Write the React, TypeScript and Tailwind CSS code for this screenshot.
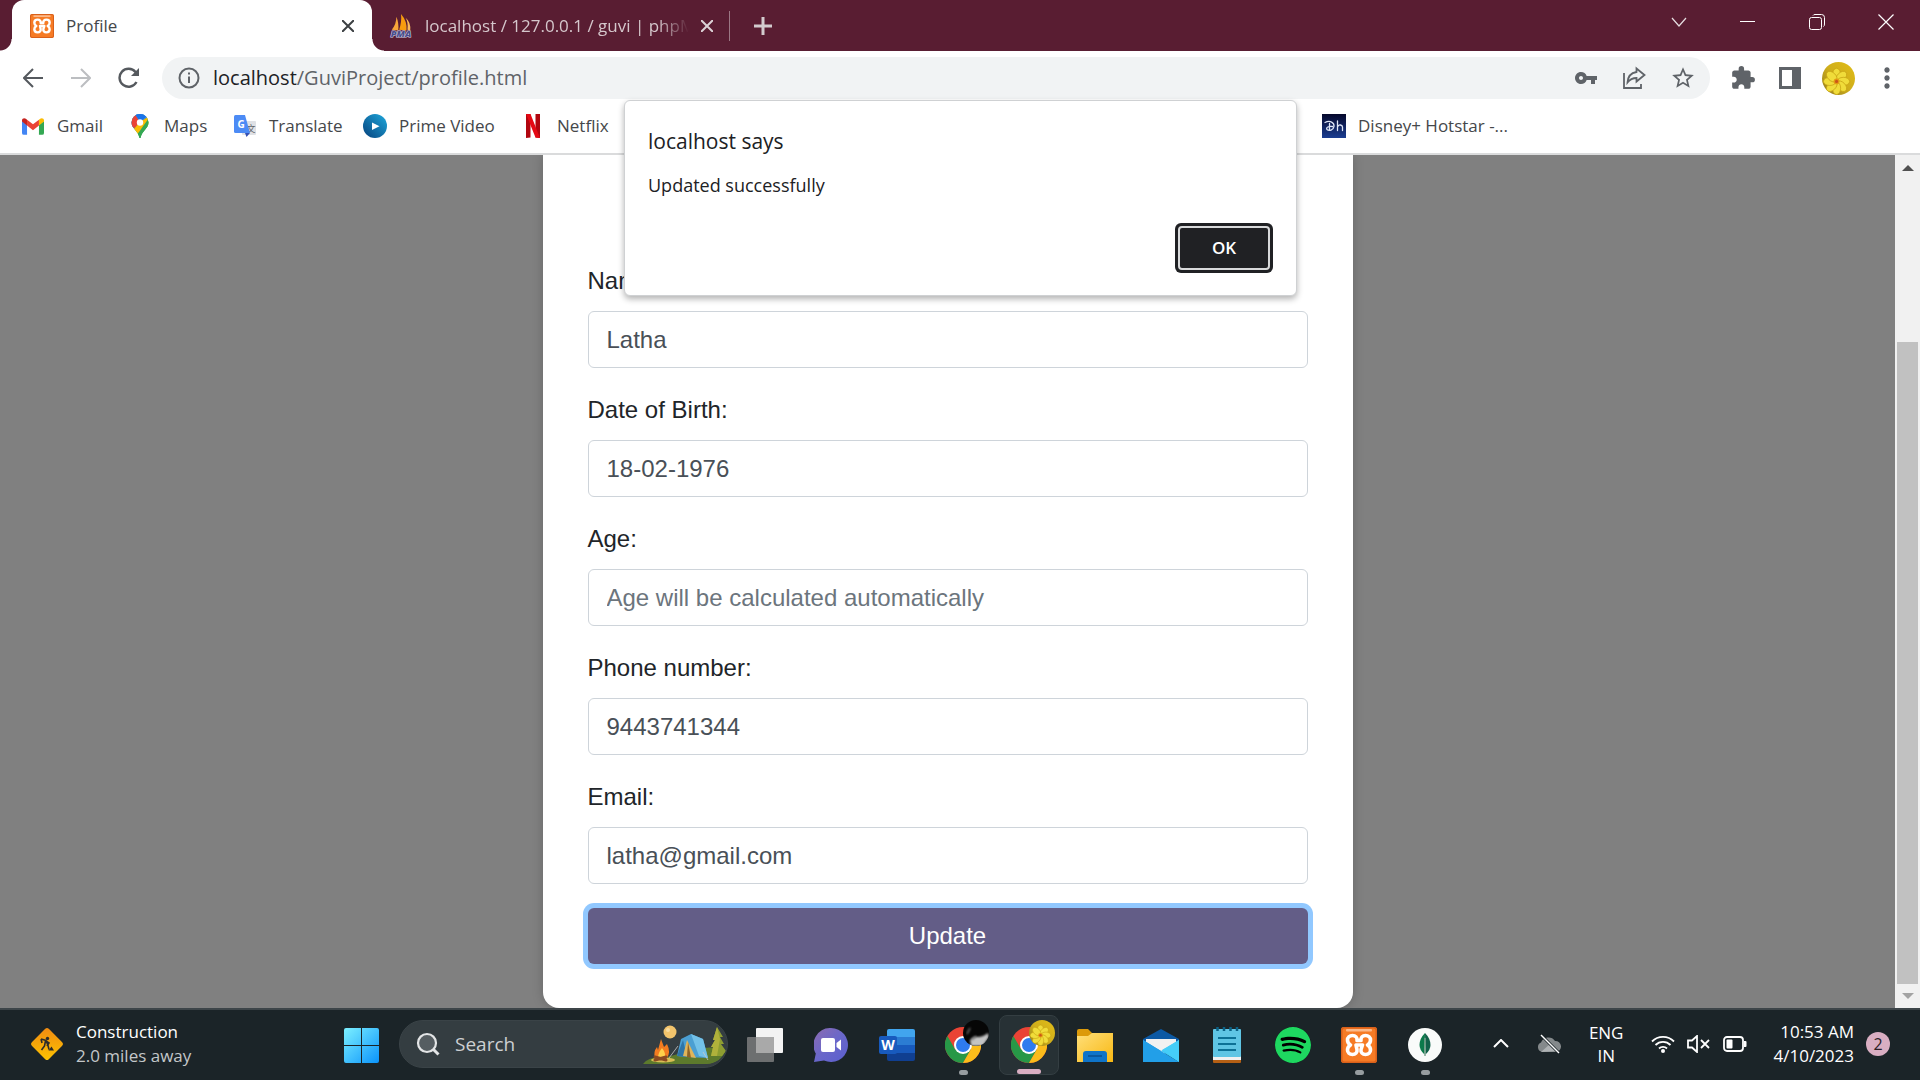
import type { ReactNode } from "react";
import { SiSpotify } from "react-icons/si";
import { MdVpnKey, MdStarBorder, MdExtension, MdMoreVert } from "react-icons/md";

const ui = "font-['Open_Sans',sans-serif]";

function XamppIcon({ className }: { className: string }) {
  return (
    <span className={`flex shrink-0 rounded-[3px] bg-[#f47a26] ${className}`}>
      <svg viewBox="0 0 36 36" className="size-full" aria-hidden="true">
        <rect width="36" height="36" rx="3" fill="#d9601a" />
        <rect x="1.5" y="1.5" width="33" height="33" rx="2" fill="#f67b25" />
        <rect x="5" y="2" width="26" height="2.5" rx="1" fill="#fbb98a" />
        <path
          d="M16 13.500C16.500 10.500 14.500 8.500 11.500 8.500 8.500 8.500 6.500 10.500 6.500 13c0 2 1 3.800 3 5-2 1.200-3 3-3 5 0 2.500 2 4.500 5 4.500s5-2 4.500-5M20 13.500c-.5-3 1.500-5 4.500-5s5 2 5 4.500c0 2-1 3.800-3 5 2 1.200 3 3 3 5 0 2.500-2 4.500-5 4.500s-5-2-4.500-5M16 13.500h4M15 18h6.500M16 22.500L15 18M20 22.500L21.500 18"
          fill="none" stroke="#fff" strokeWidth="3.6" strokeLinecap="round" strokeLinejoin="round"
        />
      </svg>
    </span>
  );
}

function PmaIcon() {
  return (
    <svg viewBox="0 0 26 26" className="size-6 shrink-0" aria-hidden="true">
      <path d="M8 3Q11 10 10 18L3 17Q8 11 8 3Z" fill="#f8a63a" />
      <path d="M13 0Q20 8 19 18L11 17Q14 8 13 0Z" fill="#f89c0e" />
      <path d="M18 4Q24 9 23 18L20 17Q21 9 18 4Z" fill="#f9b95c" />
      <text x="13" y="25" textAnchor="middle" fontFamily="Open Sans" fontWeight="800" fontStyle="italic" fontSize="10" fill="#4a4f8c" stroke="#d8d6ea" strokeWidth="1.2" paintOrder="stroke">PMA</text>
    </svg>
  );
}

function GmailIcon() {
  return (
    <svg viewBox="0 0 24 18" className="h-[17px] w-[22px]" aria-hidden="true">
      <path d="M0 3v13q0 2 2 2h3.500V7Z" fill="#4285f4" />
      <path d="M24 3v13q0 2-2 2h-3.500V7Z" fill="#34a853" />
      <path d="M5.500 8V1.500L12 6.500l6.500-5V8L12 13Z" fill="#ea4335" />
      <path d="M0 3.500V2.500C0 .2 2.500-.7 4.200.6L5.500 1.500V8Z" fill="#c5221f" />
      <path d="M24 3.500V2.500C24 .2 21.500-.7 19.800.6L18.500 1.500V8Z" fill="#fbbc04" />
    </svg>
  );
}

function MapsIcon() {
  return (
    <svg viewBox="0 0 18 24" className="h-6 w-[18px]" aria-hidden="true">
      <clipPath id="pin"><path d="M9 0a8.500 8.500 0 0 1 8.500 8.500c0 6-6.500 8-8 15.500h-1C7 16.500.5 14.500.5 8.500A8.500 8.500 0 0 1 9 0Z" /></clipPath>
      <g clipPath="url(#pin)">
        <rect width="18" height="24" fill="#34a853" />
        <path d="M0 0h18v2L9 8l-8 8H0Z" fill="#4285f4" />
        <path d="M0 13V0h4l5 8-5 6Z" fill="#ea4335" />
        <path d="M4 0l5 8 7-6-6-3Z" fill="#1a73e8" />
        <path d="M9 8l8-5 1 8-16 12V16Z" fill="#fbbc04" />
        <path d="M18 4v20H4Q12 12 18 4Z" fill="#34a853" />
      </g>
      <circle cx="9" cy="8.5" r="3.2" fill="#fff" />
    </svg>
  );
}

function TranslateIcon() {
  return (
    <svg viewBox="0 0 22 22" className="size-[22px]" aria-hidden="true">
      <rect x="8" y="6" width="14" height="14" rx="1" fill="#dfe1e5" />
      <text x="17" y="17" textAnchor="middle" fontFamily="Noto Sans CJK SC" fontSize="9" fill="#5f6368">文</text>
      <path d="M1.500 0H11l5 18H1.500Q0 18 0 16.500v-15Q0 0 1.500 0Z" fill="#4c8bf5" />
      <path d="M11 18h5l-3.500 4Z" fill="#3450b4" />
      <text x="7" y="12.5" textAnchor="middle" fontFamily="Open Sans" fontWeight="700" fontSize="10" fill="#fff">G</text>
    </svg>
  );
}

function PrimeIcon() {
  return (
    <svg viewBox="0 0 24 24" className="size-6" aria-hidden="true">
      <linearGradient id="prime" x1="1" y1="0" x2="0" y2="1"><stop stopColor="#1fa9dd" /><stop offset="1" stopColor="#06417c" /></linearGradient>
      <circle cx="12" cy="12" r="12" fill="url(#prime)" />
      <path d="M9 8.500v7.500l7.500-3.700Z" fill="#fff" />
    </svg>
  );
}

function NetflixIcon() {
  return (
    <svg viewBox="0 0 14 24" className="h-6 w-[14px]" aria-hidden="true">
      <path d="M0 0h4.500v23.500L0 24ZM9.500 0H14v24l-4.500-.5Z" fill="#b1060f" />
      <path d="M0 0h4.500L14 24l-4.500-.5Z" fill="#e50914" />
    </svg>
  );
}

function HotstarIcon() {
  return (
    <svg viewBox="0 0 24 24" className="size-6" aria-hidden="true">
      <linearGradient id="hot" x1="0" y1="0" x2="0" y2="1"><stop stopColor="#05082b" /><stop offset="1" stopColor="#1b3d91" /></linearGradient>
      <rect width="24" height="24" fill="url(#hot)" />
      <path d="M3 8.500c5-2.500 9.500 0 9 4-.5 3.500-5 5-7 3-1.500-2 2-3.700 5.500-3M7.500 9.500v6M15.500 7v9.500M15.500 13q1-2.500 3-2t2 2v3.500" fill="none" stroke="#dfe6f7" strokeWidth="1.3" strokeLinecap="round" />
    </svg>
  );
}

function Flower({ className }: { className: string }) {
  const petals = [0, 45, 90, 135, 180, 225, 270, 315];
  return (
    <svg viewBox="0 0 34 34" className={className} aria-hidden="true">
      <clipPath id="round"><circle cx="17" cy="17" r="17" /></clipPath>
      <linearGradient id="gold" x1="0" y1="1" x2="1" y2="0"><stop stopColor="#8f7a20" /><stop offset=".5" stopColor="#cfae1c" /><stop offset="1" stopColor="#e2bd16" /></linearGradient>
      <g clipPath="url(#round)">
        <rect width="34" height="34" fill="url(#gold)" />
        {petals.map((a) => (
          <ellipse key={a} cx="15" cy="13" rx="4.2" ry="6.5" fill="#f0dc3a" stroke="#c9a515" strokeWidth=".8" transform={`rotate(${a} 15 20)`} />
        ))}
        <circle cx="15" cy="20" r="3" fill="#e49a12" />
        <circle cx="15" cy="20" r="1.6" fill="#c9551a" />
      </g>
    </svg>
  );
}

function Chrome({ children }: { children?: ReactNode }) {
  return (
    <span className="relative flex">
      <svg viewBox="0 0 36 36" className="size-9" aria-hidden="true">
        <circle cx="18" cy="18" r="18" fill="#ea4335" />
        <path d="M2.400 9A18 18 0 0 0 18 36l8-13.500H10.200Z" fill="#279847" />
        <path d="M33.600 9A18 18 0 0 1 18 36l7.800-13.500L18 9Z" fill="#fbbc1b" />
        <circle cx="18" cy="18" r="9" fill="#fff" />
        <circle cx="18" cy="18" r="7" fill="#2f7bee" />
      </svg>
      <span className="absolute -top-[7px] left-[18px]">{children}</span>
    </span>
  );
}

function DarkAvatar() {
  return (
    <svg viewBox="0 0 26 26" className="size-[26px]" aria-hidden="true">
      <clipPath id="dark"><circle cx="13" cy="13" r="13" /></clipPath>
      <filter id="soft"><feGaussianBlur stdDeviation="1" /></filter>
      <g clipPath="url(#dark)">
        <rect width="26" height="26" fill="#060606" />
        <path d="M7 20q4-4 8-3 5 0 10-4l1 4-6 9H8Z" fill="#c4c4c4" filter="url(#soft)" />
        <path d="M4 14l3-6M9 20l4-4" stroke="#777" strokeWidth="1.5" filter="url(#soft)" />
      </g>
    </svg>
  );
}

const bookmarks: { label: string; icon: ReactNode; width: string }[] = [
  { label: "Gmail", icon: <GmailIcon />, width: "w-[107px]" },
  { label: "Maps", icon: <MapsIcon />, width: "w-[105px]" },
  { label: "Translate", icon: <TranslateIcon />, width: "w-[130px]" },
  { label: "Prime Video", icon: <PrimeIcon />, width: "w-[158px]" },
  { label: "Netflix", icon: <NetflixIcon />, width: "w-[801px]" },
  { label: "Disney+ Hotstar -...", icon: <HotstarIcon />, width: "w-[220px]" },
];

function TabStrip() {
  return (
    <header className="flex h-[51px] items-stretch bg-[#591d32] pl-3 text-[17px]">
      <div role="tab" aria-selected="true" className="relative flex w-[360px] items-center rounded-t-xl bg-white pl-[18px] pr-3 text-[#45474a]">
        <span className="absolute -left-3 bottom-0 size-3 bg-[radial-gradient(circle_at_0_0,#591d32_11px,white_12px)]" />
        <span className="absolute -right-3 bottom-0 size-3 bg-[radial-gradient(circle_at_100%_0,#591d32_11px,white_12px)]" />
        <XamppIcon className="size-6" />
        <span className="ml-3 flex-1">Profile</span>
        <button aria-label="Close tab" className="flex size-6 items-center justify-center">
          <svg viewBox="0 0 12 12" className="size-3" stroke="#3c4043" strokeWidth="2"><path d="M0 0l12 12M12 0L0 12" /></svg>
        </button>
      </div>
      <div role="tab" aria-selected="false" className="flex w-[358px] items-center pl-[17px] text-[#d5c7cc]">
        <PmaIcon />
        <span className="ml-3 w-[264px] overflow-hidden whitespace-nowrap [mask-image:linear-gradient(to_right,black_88%,transparent)]">
          localhost / 127.0.0.1 / guvi | phpMyAdmin
        </span>
        <button aria-label="Close tab" className="ml-[6px] flex size-6 items-center justify-center">
          <svg viewBox="0 0 12 12" className="size-3" stroke="#dcd2d6" strokeWidth="2"><path d="M0 0l12 12M12 0L0 12" /></svg>
        </button>
        <span className="ml-auto h-[30px] w-px bg-[#9b7784]" />
      </div>
      <button aria-label="New tab" className="flex w-[65px] items-center justify-center">
        <svg viewBox="0 0 18 18" className="size-[18px]" stroke="#d3cbce" strokeWidth="3"><path d="M9 0v18M0 9h18" /></svg>
      </button>
      <div className="ml-auto flex h-[43px]">
        <button aria-label="Search tabs" className="flex w-[69px] items-center justify-center">
          <svg viewBox="0 0 16 10" className="h-[10px] w-4" fill="none" stroke="#e5dde0" strokeWidth="1.2"><path d="M1 1l7 8 7-8" /></svg>
        </button>
        <button aria-label="Minimize" className="flex w-[69px] items-center justify-center"><span className="h-px w-[15px] bg-white" /></button>
        <button aria-label="Restore" className="flex w-[69px] items-center justify-center">
          <svg viewBox="0 0 16 16" className="size-4" fill="none" stroke="#fff"><rect x=".5" y="3.5" width="12" height="12" rx="2" /><path d="M4 1.500Q4.500.5 6 .5h6.500q3 0 3 3V10q0 2-1 2.500" /></svg>
        </button>
        <button aria-label="Close" className="flex w-[69px] items-center justify-center">
          <svg viewBox="0 0 16 16" className="size-4" stroke="#fff" strokeWidth="1.2"><path d="M.5.5l15 15M15.500.5l-15 15" /></svg>
        </button>
      </div>
    </header>
  );
}

function Toolbar() {
  return (
    <div className="flex h-[54px] items-center bg-white pl-[9px] pr-[17px] text-[#5f6368]">
      <nav className="flex w-[153px]" aria-label="History">
        <button aria-label="Back" className="flex w-12 items-center justify-center">
          <svg viewBox="0 0 20 20" className="size-5" fill="none" stroke="#55595e" strokeWidth="2"><path d="M20 10H2M10 1l-9 9 9 9" /></svg>
        </button>
        <button aria-label="Forward" className="flex w-12 items-center justify-center">
          <svg viewBox="0 0 20 20" className="size-5" fill="none" stroke="#bcbec1" strokeWidth="2"><path d="M0 10h18M10 1l9 9-9 9" /></svg>
        </button>
        <button aria-label="Reload" className="flex w-12 items-center justify-center">
          <svg viewBox="0 0 22 22" className="size-[22px]" fill="none" stroke="#55595e" strokeWidth="2.4"><path d="M18.500 15A9 9 0 1 1 17.500 5l2 2.500" /><path d="M21 1v8h-8Z" fill="#55595e" stroke="none" /></svg>
        </button>
      </nav>
      <div className="flex h-[42px] flex-1 items-center rounded-full bg-[#f1f3f4] pl-4 pr-[14px]">
        <svg viewBox="0 0 22 22" className="size-[22px]" fill="none" stroke="#5f6368" strokeWidth="2" aria-hidden="true"><circle cx="11" cy="11" r="9.5" /><path d="M11 9.500V16M11 5.500v2" /></svg>
        <div className="ml-[13px] flex-1 text-[20px]"><span className="text-[#202124]">localhost</span>/GuviProject/profile.html</div>
        <div className="flex items-center gap-6">
          <button aria-label="Passwords"><MdVpnKey className="size-6" /></button>
          <button aria-label="Share">
            <svg viewBox="0 0 24 24" className="size-6" fill="none" stroke="#5f6368" strokeWidth="1.8"><path d="M2 7v15h17v-4" /><path d="M14.500 2.500L22.500 9l-8 6.500V12Q9 12 5.500 16.500 6 7.500 14.500 6Z" /></svg>
          </button>
          <button aria-label="Bookmark"><MdStarBorder className="size-[26px]" /></button>
        </div>
      </div>
      <div className="flex items-center pl-5">
        <button aria-label="Extensions" className="flex w-[26px] justify-center"><MdExtension className="size-[26px]" /></button>
        <button aria-label="Side panel" className="ml-[23px]"><span className="block size-[22px] border-[3px] border-r-[9px] border-[#5f6368]" /></button>
        <button aria-label="Account" className="ml-[21px]"><Flower className="size-[33px]" /></button>
        <button aria-label="Menu" className="ml-4"><MdMoreVert className="size-8" /></button>
      </div>
    </div>
  );
}

function BookmarkBar() {
  return (
    <nav aria-label="Bookmarks" className="flex h-[50px] items-center overflow-hidden border-b-2 border-[#dadbdc] bg-white pb-[6px] pl-[21px] text-[17px] text-[#45474a]">
      {bookmarks.map((b) => (
        <a key={b.label} href="#" className={`flex shrink-0 items-center whitespace-nowrap ${b.width}`}>
          <span className="flex w-6 justify-center">{b.icon}</span>
          <span className="ml-3">{b.label}</span>
        </a>
      ))}
    </nav>
  );
}

function AlertDialog() {
  return (
    <div role="alertdialog" aria-labelledby="alert-title" className="absolute left-1/2 top-[100px] ml-[-336px] h-[196px] w-[673px] rounded-md border border-[#cfd1d3] bg-white px-[23px] pt-6 text-[#202124] shadow-[0_3px_6px_rgba(0,0,0,0.3)]">
      <h1 id="alert-title" className="text-[21px] leading-8">localhost says</h1>
      <p className="mt-3 text-[18px] leading-8">Updated successfully</p>
      <button className="ml-auto mt-[22px] block h-[50px] w-[98px] rounded-md bg-[#202124] p-[3px]">
        <span className="flex size-full items-center justify-center rounded-sm border-2 border-[#d9dadb] text-[17px] font-semibold text-white">OK</span>
      </button>
    </div>
  );
}

const fields = [
  { id: "name", label: "Name:", value: "Latha", placeholder: "" },
  { id: "dob", label: "Date of Birth:", value: "18-02-1976", placeholder: "" },
  { id: "age", label: "Age:", value: "", placeholder: "Age will be calculated automatically" },
  { id: "phone", label: "Phone number:", value: "9443741344", placeholder: "" },
  { id: "email", label: "Email:", value: "latha@gmail.com", placeholder: "" },
];

function ProfilePage() {
  return (
    <main className="flex min-h-0 flex-1 bg-[#808080]">
      <div className="flex flex-1 justify-center overflow-hidden font-['Liberation_Sans',sans-serif] text-[24px] leading-9">
        <form className="flex w-full max-w-[810px] flex-col gap-6 rounded-b-2xl bg-white px-[45px] pt-[108px] shadow-[0_0_12px_rgba(0,0,0,0.2)]">
          {fields.map((f) => (
            <div key={f.id} className="flex flex-col gap-3">
              <label htmlFor={f.id} className="text-[#212529]">{f.label}</label>
              <input id={f.id} defaultValue={f.value} placeholder={f.placeholder} className="h-[57px] rounded-md border border-[#ced4da] bg-white px-[18px] text-[#495057] placeholder:text-[#6c757d]" />
            </div>
          ))}
          <button type="button" className="h-[56px] rounded-md bg-[#635d87] text-white ring-5 ring-[#91c8ff]">Update</button>
        </form>
      </div>
      <div className="flex w-[25px] flex-col items-center bg-[#f1f1f1]" aria-hidden="true">
        <svg viewBox="0 0 12 6" className="mt-[10px] h-[6px] w-3"><path d="M0 6l6-6 6 6Z" fill="#505050" /></svg>
        <div className="mt-[171px] w-[21px] flex-1 bg-[#c1c1c1]" />
        <svg viewBox="0 0 12 6" className="mb-[9px] mt-[9px] h-[6px] w-3"><path d="M0 0l6 6 6-6Z" fill="#a3a3a3" /></svg>
      </div>
    </main>
  );
}

function WordIcon() {
  return (
    <svg viewBox="0 0 36 34" className="h-[34px] w-9" aria-hidden="true">
      <path d="M10 1h24q2 0 2 2v6H8V3q0-2 2-2Z" fill="#41a5ee" />
      <path d="M8 9h28v8H8Z" fill="#2b7cd3" /><path d="M8 17h28v8H8Z" fill="#185abd" />
      <path d="M8 25h28v6q0 2-2 2H10q-2 0-2-2Z" fill="#103f91" />
      <rect x="0" y="8" width="18" height="18" rx="2" fill="#185abd" />
      <text x="9" y="22" textAnchor="middle" fontFamily="Open Sans" fontWeight="700" fontSize="14" fill="#fff">W</text>
    </svg>
  );
}

function TentScene() {
  return (
    <svg viewBox="0 0 84 40" className="h-10 w-[84px]" aria-hidden="true">
      <path d="M0 40Q5 32 24 33L50 26q22-6 32 2-4 9-15 12Z" fill="#5d7a2c" />
      <ellipse cx="20" cy="36" rx="12" ry="2.5" fill="#d9bd54" />
      <circle cx="27" cy="8" r="6.5" fill="#f2c46c" /><circle cx="25" cy="6" r="2" fill="#f8dca0" />
      <path d="M74 3l6 10h-3l4 7h-3l5 7-4 5H68l2-9h-2l4-7h-2Z" fill="#8e9d31" />
      <path d="M74 3l3 12-3 17h-6l2-9h-2l4-7h-2Z" fill="#b0b13b" />
      <path d="M34 32l4-17 10-5 12 5 5 19-22-1Z" fill="#4b9fd2" />
      <path d="M38 15l10-5 8 22 9 2-5-19-12-5Z" fill="#73c1e8" />
      <path d="M34 32l6-16 4 17Z" fill="#2e75a8" /><path d="M40 32l4-16 9 18Z" fill="#e0b55b" /><path d="M44 33l1-15 3 16Z" fill="#8e6327" />
      <path d="M26 34l9-12M60 28l5 8" stroke="#c9c9c9" strokeWidth=".8" />
      <path d="M12 34q-2-6 2-11l1 3 3-11 3 8 3-3q4 8 0 14Z" fill="#f47c20" />
      <path d="M15 34q0-5 4-10 4 5 3 10Z" fill="#ffd04a" />
      <path d="M12 33l11 3M23 33l-11 3" stroke="#8b4a22" strokeWidth="3" strokeLinecap="round" />
    </svg>
  );
}

const apps: { name: string; icon: ReactNode; state?: "running" | "active" }[] = [
  {
    name: "Task view",
    icon: <svg viewBox="0 0 36 34" className="h-[34px] w-9"><rect x="9" y="0" width="27" height="25" rx="1" fill="#f3f3f3" /><rect x="0" y="9" width="27" height="25" rx="1" fill="#6d6f70" /><path d="M9 9h18v16H9Z" fill="#a9a9a9" /></svg>,
  },
  {
    name: "Chat",
    icon: (
      <svg viewBox="0 0 34 34" className="size-[34px]">
        <linearGradient id="chat" x1="0" y1="0" x2="1" y2="1"><stop stopColor="#8c6bb0" /><stop offset=".5" stopColor="#6a67c9" /><stop offset="1" stopColor="#5b5fd0" /></linearGradient>
        <path d="M17 0a17 17 0 1 1-7 32.500L0 34l1.800-8.500A17 17 0 0 1 17 0Z" fill="url(#chat)" />
        <rect x="7" y="10" width="14" height="14" rx="2" fill="#fff" /><path d="M22.500 15l4.500-3.500v11L22.500 19Z" fill="#fff" />
      </svg>
    ),
  },
  { name: "Word", icon: <WordIcon /> },
  { name: "Chrome", state: "running", icon: <Chrome><DarkAvatar /></Chrome> },
  { name: "Chrome profile", state: "active", icon: <Chrome><Flower className="size-[26px]" /></Chrome> },
  {
    name: "File Explorer",
    icon: (
      <svg viewBox="0 0 36 33" className="h-[33px] w-9">
        <path d="M0 2q0-2 2-2h9l4 4v6H0Z" fill="#dc9a0a" />
        <linearGradient id="folder" x1="0" y1="0" x2="1" y2="1"><stop stopColor="#ffdf7a" /><stop offset="1" stopColor="#f8b813" /></linearGradient>
        <path d="M0 7h11l4-3h21v29H0Z" fill="url(#folder)" />
        <path d="M6 33v-8q0-3 3-3h18q3 0 3 3v8Z" fill="#0f74c9" /><path d="M11 27h14" stroke="#0a4f8f" strokeWidth="1.5" />
      </svg>
    ),
  },
  {
    name: "Mail",
    icon: (
      <svg viewBox="0 0 36 33" className="h-[33px] w-9">
        <path d="M0 10L18 0l18 10v5H0Z" fill="#0c59a4" /><path d="M3 10h30v10L18 26 3 20Z" fill="#f1f1f1" />
        <path d="M0 11l18 11L0 33Z" fill="#1e98e4" /><path d="M36 11L18 22l18 11Z" fill="#3fc8f5" /><path d="M0 11l36 22H0Z" fill="#229fe8" /><path d="M36 11v22L19 21Z" fill="#45cdf8" />
      </svg>
    ),
  },
  {
    name: "Notepad",
    icon: (
      <svg viewBox="0 0 28 36" className="h-9 w-7">
        <rect y="28" width="28" height="8" rx="1" fill="#b45f14" /><rect y="26" width="28" height="7" fill="#f0f0f0" />
        <rect y="2" width="28" height="28" rx="1" fill="#5fc5e4" />
        <path d="M4.500 0v4M11 0v4M17.500 0v4M24 0v4" stroke="#0b6185" strokeWidth="2.5" />
        <path d="M5 11h18M5 17h18M5 23h18" stroke="#0c7196" strokeWidth="2" />
      </svg>
    ),
  },
  { name: "Spotify", icon: <span className="rounded-full bg-black"><SiSpotify className="size-9 text-[#1ed760]" /></span> },
  { name: "XAMPP", state: "running", icon: <XamppIcon className="size-9" /> },
  {
    name: "MongoDB Compass", state: "running",
    icon: (
      <svg viewBox="0 0 34 34" className="size-[34px]">
        <circle cx="17" cy="17" r="17" fill="#f9fbfa" />
        <path d="M17 5q-5.500 5.500-5.500 12 0 5 5 9.500Z" fill="#0b7a4b" /><path d="M17 5q5.500 5.500 5.500 12 0 5-5 9.500Z" fill="#116149" />
        <path d="M16.300 10h1.400v18h-1.400Z" fill="#78a08c" />
      </svg>
    ),
  },
];

function Taskbar() {
  return (
    <footer className="flex h-[72px] shrink-0 items-stretch border-t-2 border-[#3d4549] bg-[#1b2428] text-[17px] text-white">
      <button className="flex w-[330px] items-center pb-[2px] pl-[30px] text-left">
        <svg viewBox="0 0 34 34" className="size-[34px]" aria-hidden="true">
          <linearGradient id="sign" x1="0" y1="0" x2="1" y2="1"><stop stopColor="#f08a12" /><stop offset="1" stopColor="#fdc400" /></linearGradient>
          <rect x="5" y="5" width="24" height="24" rx="2.5" fill="url(#sign)" transform="rotate(45 17 17)" />
          <circle cx="17.5" cy="11.5" r="1.7" fill="#2b2b2b" />
          <path d="M11 12l5 1.500 2 5 1 4M15.500 14l-1 5-3 4M16 14l3 2-2 3M11 12l1 4" fill="none" stroke="#2b2b2b" strokeWidth="1.6" /><path d="M18.500 23.500l3-4 2.500 4Z" fill="#2b2b2b" />
        </svg>
        <span className="ml-3 leading-6">Construction<br /><span className="text-[#c3c7c9]">2.0 miles away</span></span>
      </button>
      <button aria-label="Start" className="flex w-[63px] items-center justify-center">
        <svg viewBox="0 0 35 35" className="size-[35px]">
          <linearGradient id="win" gradientUnits="userSpaceOnUse" x1="0" y1="0" x2="35" y2="35"><stop stopColor="#7cf0ff" /><stop offset="1" stopColor="#0a93fb" /></linearGradient>
          <path d="M2 0h15v17H0V2q0-2 2-2ZM18 0h15q2 0 2 2v15H18ZM0 18h17v17H2q-2 0-2-2ZM18 18h17v15q0 2-2 2H18Z" fill="url(#win)" />
        </svg>
      </button>
      <div className="ml-[6px] flex w-[329px] items-center pb-[2px]">
        <label className="flex h-12 w-full items-center rounded-full border border-[#3a4347] bg-[#343d41] pl-4">
          <svg viewBox="0 0 24 24" className="size-6 shrink-0" fill="none" stroke="#e3e5e6" strokeWidth="2.2" aria-hidden="true"><circle cx="11" cy="11" r="9" fill="#555d61" /><path d="M17.500 17.500l5 5" strokeWidth="3" /></svg>
          <input aria-label="Search" placeholder="Search" className="ml-[15px] w-full min-w-0 bg-transparent text-[19px] outline-none placeholder:text-[#cdd0d2]" />
          <span className="flex shrink-0 overflow-hidden rounded-r-full"><TentScene /></span>
        </label>
      </div>
      <div className="ml-1 flex items-center">
        {apps.map((a) => (
          <button key={a.name} aria-label={a.name} className="flex h-full w-[66px] items-center justify-center">
            <span className={a.state === "active" ? "relative flex h-[60px] w-[60px] items-center justify-center rounded-lg border border-[#343e42] bg-[#273135]" : "relative flex h-[60px] w-[60px] items-center justify-center"}>
              {a.icon}
              {a.state === "active" && <span className="absolute bottom-0 h-[5px] w-6 rounded-full bg-[#d9aec2]" />}
              {a.state === "running" && <span className="absolute bottom-0 h-[5px] w-[9px] rounded-full bg-[#979da0]" />}
            </span>
          </button>
        ))}
      </div>
      <div className="ml-auto flex items-center pb-[3px] pr-[30px]">
        <button aria-label="Hidden icons"><svg viewBox="0 0 16 9" className="h-[9px] w-4" fill="none" stroke="#fff" strokeWidth="2"><path d="M1 8l7-7 7 7" /></svg></button>
        <button aria-label="OneDrive" className="ml-7">
          <svg viewBox="0 0 24 20" className="h-5 w-6"><path d="M5 18a5 5 0 0 1-1-9.500A8 8 0 0 1 18 7a5.500 5.500 0 0 1 1 11Z" fill="#84898b" /><path d="M4 18l9-8 8 7Z" fill="#aeb2b4" /><path d="M4 1l18 18" stroke="#1b2428" strokeWidth="3" /><path d="M4 1l18 18" stroke="#fff" strokeWidth="1.5" /></svg>
        </button>
        <button className="ml-7 leading-[23px]">ENG<br />IN</button>
        <button aria-label="Network, volume and battery" className="ml-7 flex items-center gap-3">
          <svg viewBox="0 0 24 18" className="h-[18px] w-6" fill="none" stroke="#fff" strokeWidth="1.8"><path d="M1 6.500a15.500 15.500 0 0 1 22 0M4.500 10a10.500 10.500 0 0 1 15 0M8 13.500a5.800 5.800 0 0 1 8 0" /><circle cx="12" cy="16" r="2" fill="#fff" stroke="none" /></svg>
          <svg viewBox="0 0 24 18" className="h-[18px] w-6" fill="none" stroke="#fff" strokeWidth="1.8"><path d="M1 5.500h4L10 1v16l-5-4.500H1ZM14 5l8 8M22 5l-8 8" /></svg>
          <svg viewBox="0 0 24 16" className="h-4 w-6"><rect x="1" y="1" width="19" height="14" rx="3" fill="none" stroke="#fff" strokeWidth="1.8" /><rect x="3.5" y="3.5" width="6" height="9" rx="1" fill="#fff" /><path d="M21 5h1.500q1 0 1 1v4q0 1-1 1H21Z" fill="#fff" /></svg>
        </button>
        <button className="ml-[26px] text-right leading-6">10:53 AM<br />4/10/2023</button>
        <button aria-label="2 notifications" className="ml-3 flex size-6 items-center justify-center rounded-full bg-[#d9aec2] text-[16px] leading-none text-[#2b2026]">2</button>
      </div>
    </footer>
  );
}

export default function App() {
  return (
    <div className={`relative flex h-screen flex-col overflow-hidden ${ui}`}>
      <TabStrip />
      <Toolbar />
      <BookmarkBar />
      <ProfilePage />
      <Taskbar />
      <AlertDialog />
    </div>
  );
}
